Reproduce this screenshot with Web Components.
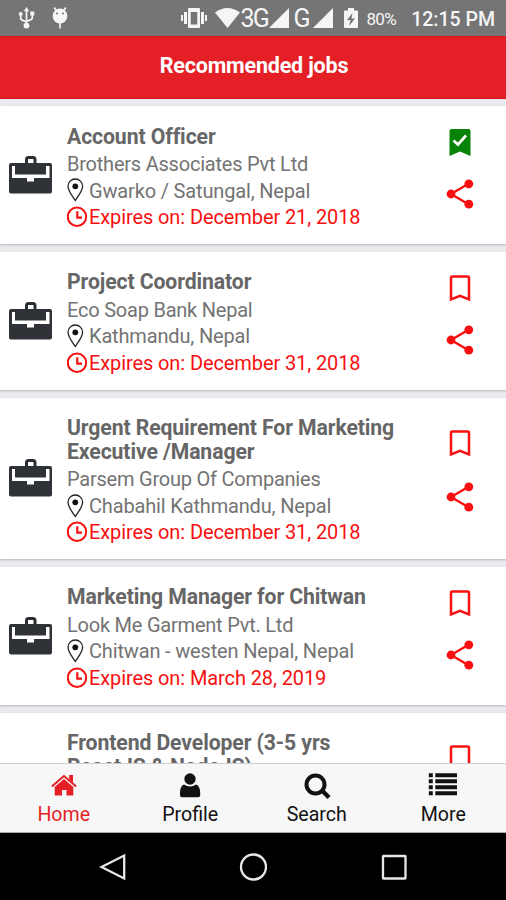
<!DOCTYPE html>
<html lang="en">
<head>
<meta charset="utf-8">
<title>Recommended jobs</title>
<style>
  body {
    margin: 0;
    font-family: Roboto, "Liberation Sans", sans-serif;
  }
</style>
</head>
<body>
<jobs-app></jobs-app>

<script>
class StatusBar extends HTMLElement {
  constructor() {
    super();
    this.attachShadow({ mode: "open" });
  }

  static get styles() {
    return /* css */`
      :host {
        display: flex;
        align-items: center;
        height: 36px;
        flex: none;
        box-sizing: border-box;
        padding: 0 11px 0 18px;
        background: #757575;
        color: #f5f5f5;
      }

      svg {
        display: block;
        flex: none;
        fill: #f5f5f5;
      }

      .android { margin-left: 17px; }
      .vibrate { margin-left: auto; }
      .wifi { margin-left: 8px; }
      .net { width: 28px; font-size: 25px; line-height: 36px; letter-spacing: -1.600px; padding-top: 2px; margin-left: 0; }
      .signal + .net { width: 19px; margin-left: 4px; }
      .signal { margin-left: 1px; }
      .battery { margin-left: 11px; }
      .percent { font-size: 17px; letter-spacing: -0.600px; margin-left: 8px; padding-top: 2px; }
      .time { font-size: 19.500px; font-weight: 500; margin-left: 15px; padding-top: 2px; white-space: nowrap; }
    `;
  }

  connectedCallback() {
    this.render();
  }

  render() {
    const signal = /* html */`<svg class="signal" width="20" height="20" viewBox="0 0 20 20"><path d="M20 0V20H0z"/></svg>`;
    this.shadowRoot.innerHTML = /* html */`
    <style>${StatusBar.styles}</style>
    <svg width="17" height="22" viewBox="0 0 17 22">
      <path d="M8.500 2v17M2.700 8v3.500q0 1 1 1.400L8.500 15M14.300 7v4q0 1-1 1.400L8.500 14.500" fill="none" stroke="#f5f5f5" stroke-width="1.700"/>
      <path d="M8.500 0l2.700 4.200H5.800zM12.300 4.500h4v4h-4z"/><circle cx="2.700" cy="7" r="2"/><circle cx="8.500" cy="18.600" r="2.900"/>
    </svg>
    <svg class="android" width="16" height="22" viewBox="0 0 16 22">
      <path d="M2.200.5l2 3M13.800.5l-2 3M8 14v7.500" stroke="#f5f5f5" stroke-width="1.700"/>
      <circle cx="8" cy="9" r="7.400"/><circle cx="5" cy="6.600" r="1" fill="#757575"/><circle cx="11" cy="6.600" r="1" fill="#757575"/>
    </svg>
    <svg class="vibrate" width="26" height="20" viewBox="0 0 26 20">
      <path d="M0 7h2v6H0zM3 4h3v12H3zM20 4h3v12h-3zM24 7h2v6h-2z"/>
      <path fill-rule="evenodd" d="M8 0h10q1 0 1 1v18q0 1-1 1H8q-1 0-1-1V1q0-1 1-1zm1.700 4v12.500h6.600V4z"/>
    </svg>
    <svg class="wifi" width="25" height="20" viewBox="0 0 25 20"><path d="M0 4.500Q12.500-4.500 25 4.500L12.500 20z"/></svg>
    <span class="net">3G</span>${signal}
    <span class="net">G</span>${signal}
    <svg class="battery" width="14" height="20" viewBox="0 0 14 20">
      <path d="M4 0h6v2.500h3q1 0 1 1V19q0 1-1 1H1q-1 0-1-1V3.500q0-1 1-1h3z"/>
      <path d="M8.500 5L3 12h3.500L5 18l6-7.500H7.500z" fill="#757575"/>
    </svg>
    <span class="percent">80%</span>
    <span class="time">12:15 PM</span>`;
  }
}

customElements.define("status-bar", StatusBar);

class TitleBar extends HTMLElement {
  constructor() {
    super();
    this.attachShadow({ mode: "open" });
  }

  static get styles() {
    return /* css */`
      :host {
        display: flex;
        align-items: center;
        justify-content: center;
        flex: none;
        height: 63px;
        box-sizing: border-box;
        padding: 0 0 5px 2px;
        background: #e51f26;
        border-top: 1px solid #d8141a;
        border-bottom: 1px solid #d8141a;
        color: #fff;
        font-size: 21.500px;
        font-weight: 700;
        letter-spacing: -0.200px;
      }
    `;
  }

  connectedCallback() {
    this.render();
  }

  render() {
    this.shadowRoot.innerHTML = /* html */`
    <style>${TitleBar.styles}</style>
    <slot></slot>`;
  }
}

customElements.define("title-bar", TitleBar);

class JobCard extends HTMLElement {
  constructor() {
    super();
    this.attachShadow({ mode: "open" });
  }

  static get styles() {
    return /* css */`
      :host {
        display: flex;
        flex: none;
        box-sizing: border-box;
        min-height: 137.700px;
        background: #fff;
        box-shadow: 0 1px 2px #b4b4ba;
        color: #737373;
        font-size: 20px;
        line-height: 26.600px;
        --actions-top: 23px;
        --actions-gap: 22.800px;
      }

      :host([tall]) {
        --actions-top: 32.500px;
        --actions-gap: 24.500px;
      }

      .logo {
        display: flex;
        align-items: center;
        width: 58px;
        padding-left: 9px;
        box-sizing: border-box;
      }

      .info {
        flex: 1;
        padding: 18.400px 0 13px 9px;
        white-space: nowrap;
      }

      h2 {
        margin: 0 0 2.600px;
        color: #666;
        font-size: 21.200px;
        font-weight: 700;
        letter-spacing: -0.100px;
        line-height: 23.800px;
      }

      .row {
        display: flex;
        align-items: center;
        height: 26.600px;
      }

      .row svg {
        flex: none;
        width: 22px;
        margin-top: -1px;
      }

      .company {
        letter-spacing: -0.220px;
      }

      .place {
        letter-spacing: -0.160px;
      }

      .expires {
        color: #f80f0f;
        letter-spacing: -0.100px;
      }

      .actions {
        display: flex;
        flex-direction: column;
        align-items: center;
        gap: var(--actions-gap);
        width: 93px;
        padding-top: var(--actions-top);
      }

      svg {
        display: block;
      }
    `;
  }

  connectedCallback() {
    this.render();
  }

  get bookmark() {
    if (this.hasAttribute("saved")) {
      return /* html */`<svg width="22" height="27" viewBox="0 0 22 27">
        <path d="M2.500 0h17q2 0 2 2v25L11 22.500.500 27V2q0-2 2-2z" fill="#078407"/>
        <path d="M4.500 11.500l4.500 4L17 6.500" fill="none" stroke="#fff" stroke-width="2.700"/>
      </svg>`;
    }
    return /* html */`<svg width="22" height="27" viewBox="0 0 22 27">
      <path d="M3.300 1.500h15.400q1.300 0 1.300 1.300v21.700l-9-3.700-9 3.700V2.800q0-1.300 1.300-1.300z" fill="none" stroke="#f80f0f" stroke-width="2.500"/>
    </svg>`;
  }

  get details() {
    if (!this.hasAttribute("company")) {
      return "";
    }
    return /* html */`
      <div class="row company">${this.getAttribute("company")}</div>
      <div class="row place">
        <svg width="22" height="24" viewBox="0 0 22 24">
          <path d="M8.300 22.500C5 17.500 1 13 1 8.300a7.300 7.300 0 0 1 14.600 0C15.600 13 11.500 17.500 8.300 22.500z" fill="none" stroke="#222" stroke-width="1.300"/>
          <circle cx="8.300" cy="8.300" r="2.900" fill="#111"/>
        </svg>
        <span>${this.getAttribute("place")}</span>
      </div>
      <div class="row expires">
        <svg width="22" height="22" viewBox="0 0 22 22" fill="none" stroke="#f80f0f">
          <circle cx="10" cy="10.800" r="9.200" stroke-width="2"/>
          <path d="M10.300 5.300v6.300h4.700" stroke-width="2.200"/>
        </svg>
        <span>Expires on: ${this.getAttribute("expires")}</span>
      </div>`;
  }

  render() {
    this.shadowRoot.innerHTML = /* html */`
    <style>${JobCard.styles}</style>
    <div class="logo">
      <svg width="43" height="38" viewBox="0 0 43 38">
        <path d="M17.500 8V3.500q0-2 2-2h4.500q2 0 2 2V8" fill="none" stroke="#2b2f33" stroke-width="3"/>
        <rect y="7" width="43" height="30.500" rx="2" fill="#2f3337"/>
        <path d="M3 10h3v8.500h31V10h3.500v12H25v3.500h-7V22H3z" fill="#fff"/>
      </svg>
    </div>
    <div class="info">
      <h2><slot></slot></h2>
      ${this.details}
    </div>
    <div class="actions">
      ${this.bookmark}
      <svg width="28" height="30" viewBox="0 0 28 30" fill="#f80f0f">
        <path d="M23 4.500L5 15l18 10.500" fill="none" stroke="#f80f0f" stroke-width="2.400"/>
        <circle cx="22.800" cy="4.800" r="4.400"/><circle cx="5" cy="15" r="4.400"/><circle cx="22.800" cy="25.200" r="4.400"/>
      </svg>
    </div>`;
  }
}

customElements.define("job-card", JobCard);

class TabItem extends HTMLElement {
  constructor() {
    super();
    this.attachShadow({ mode: "open" });
  }

  static get icons() {
    return {
      home: `<path d="M.8 13.500L13 3l12.200 10.500" fill="none" stroke="currentColor" stroke-width="2"/><path d="M18.200 2h3.800v8l-3.800-3.300zM13 6l9.300 8V22.500H15.500V17h-4.500v5.500H3.700V14z"/>`,
      profile: `<circle cx="13" cy="6" r="5.700"/><path d="M7 11.500q6 4 12 0 4.200 1.500 4.200 8.500v2.300q0 2-2 2H5q-2 0-2-2V20q0-7 4-8.500z"/>`,
      search: `<circle cx="11.500" cy="11.500" r="9" fill="none" stroke="currentColor" stroke-width="4"/><path d="M18 17.500l7 7" stroke="currentColor" stroke-width="4.400"/>`,
      more: `<path d="M-1.200.3h4v4h-4zM5.300.3H27v4H5.300zM-1.200 6.300h4v4h-4zM5.300 6.300H27v4H5.300zM-1.200 12.300h4v4h-4zM5.300 12.300H27v4H5.300zM-1.200 18.300h4v4h-4zM5.300 18.300H27v4H5.300z"/>`
    };
  }

  static get styles() {
    return /* css */`
      :host {
        display: flex;
        flex: 1;
        flex-direction: column;
        align-items: center;
        padding: 9px 0 0 1px;
        color: #111;
        font-size: 19.600px;
        line-height: 26px;
      }

      :host([active]) {
        color: #e51f26;
      }

      svg {
        display: block;
        overflow: visible;
        fill: currentColor;
        margin-bottom: 4px;
      }
    `;
  }

  connectedCallback() {
    this.render();
  }

  render() {
    this.shadowRoot.innerHTML = /* html */`
    <style>${TabItem.styles}</style>
    <svg width="26" height="25" viewBox="0 0 26 25">${TabItem.icons[this.getAttribute("icon")]}</svg>
    <slot></slot>`;
  }
}

customElements.define("tab-item", TabItem);

class SystemNav extends HTMLElement {
  constructor() {
    super();
    this.attachShadow({ mode: "open" });
  }

  static get styles() {
    return /* css */`
      :host {
        display: flex;
        flex: none;
        align-items: center;
        justify-content: center;
        gap: 112.500px;
        height: 67px;
        background: #000;
      }

      svg {
        display: block;
        fill: none;
        stroke: #e8e8e8;
        stroke-width: 2.300;
      }
    `;
  }

  connectedCallback() {
    this.render();
  }

  render() {
    this.shadowRoot.innerHTML = /* html */`
    <style>${SystemNav.styles}</style>
    <svg width="28" height="28" viewBox="0 0 28 28"><path d="M25.200 2.500v23L2.500 14z"/></svg>
    <svg width="28" height="28" viewBox="0 0 28 28"><circle cx="14.500" cy="14" r="12.500"/></svg>
    <svg width="28" height="28" viewBox="0 0 28 28"><rect x="3" y="3" width="22.500" height="22.500" rx=".5"/></svg>`;
  }
}

customElements.define("system-nav", SystemNav);

class JobsApp extends HTMLElement {
  constructor() {
    super();
    this.attachShadow({ mode: "open" });
  }

  static get styles() {
    return /* css */`
      :host {
        display: flex;
        flex-direction: column;
        width: 506px;
        height: 900px;
        overflow: hidden;
        background: #e9e9ee;
      }

      main {
        display: flex;
        flex: 1;
        flex-direction: column;
        gap: 8px;
        min-height: 0;
        padding-top: 7.300px;
        overflow: hidden;
      }

      nav {
        display: flex;
        flex: none;
        height: 70px;
        box-sizing: border-box;
        background: #f7f7f7;
        border-top: 1px solid #cfcfcf;
        border-bottom: 1px solid #aaa;
      }
    `;
  }

  connectedCallback() {
    this.render();
  }

  render() {
    this.shadowRoot.innerHTML = /* html */`
    <style>${JobsApp.styles}</style>
    <status-bar></status-bar>
    <title-bar>Recommended jobs</title-bar>
    <main>
      <job-card saved company="Brothers Associates Pvt Ltd" place="Gwarko / Satungal, Nepal" expires="December 21, 2018">Account Officer</job-card>
      <job-card company="Eco Soap Bank Nepal" place="Kathmandu, Nepal" expires="December 31, 2018">Project Coordinator</job-card>
      <job-card tall company="Parsem Group Of Companies" place="Chabahil Kathmandu, Nepal" expires="December 31, 2018">Urgent Requirement For Marketing<br>Executive /Manager</job-card>
      <job-card company="Look Me Garment Pvt. Ltd" place="Chitwan - westen Nepal, Nepal" expires="March 28, 2019">Marketing Manager for Chitwan</job-card>
      <job-card tall>Frontend Developer (3-5 yrs<br>ReactJS &amp; NodeJS)</job-card>
    </main>
    <nav>
      <tab-item active icon="home">Home</tab-item>
      <tab-item icon="profile">Profile</tab-item>
      <tab-item icon="search">Search</tab-item>
      <tab-item icon="more">More</tab-item>
    </nav>
    <system-nav></system-nav>`;
  }
}

customElements.define("jobs-app", JobsApp);
</script>
</body>
</html>
